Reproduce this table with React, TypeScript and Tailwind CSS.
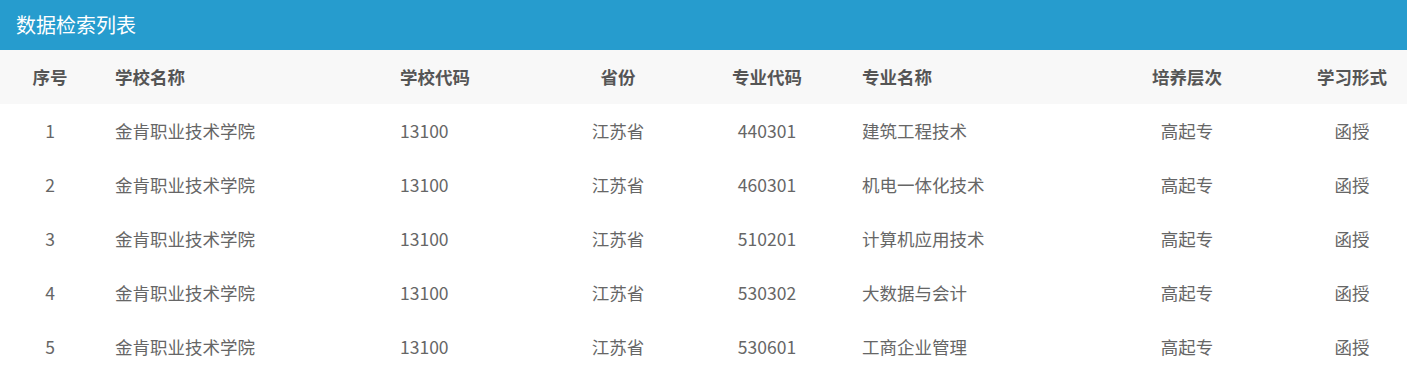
import React from "react";

const rows = [
  ["1", "金肯职业技术学院", "13100", "江苏省", "440301", "建筑工程技术", "高起专", "函授"],
  ["2", "金肯职业技术学院", "13100", "江苏省", "460301", "机电一体化技术", "高起专", "函授"],
  ["3", "金肯职业技术学院", "13100", "江苏省", "510201", "计算机应用技术", "高起专", "函授"],
  ["4", "金肯职业技术学院", "13100", "江苏省", "530302", "大数据与会计", "高起专", "函授"],
  ["5", "金肯职业技术学院", "13100", "江苏省", "530601", "工商企业管理", "高起专", "函授"],
];

const headers = ["序号", "学校名称", "学校代码", "省份", "专业代码", "专业名称", "培养层次", "学习形式"];
const align = [
  "justify-center",
  "justify-start pl-[15px]",
  "justify-start pl-[15px]",
  "justify-center",
  "justify-center",
  "justify-start pl-[15px]",
  "justify-center",
  "justify-center",
];

const grid = "grid grid-cols-[100px_285px_164px_138px_160px_230px_220px_110px]";

export default function App() {
  return (
    <div
      className="w-[1407px] h-[371px] overflow-hidden bg-white"
      style={{ fontFamily: '"Noto Sans CJK SC", "Noto Sans", sans-serif' }}
    >
      <div className="h-[50px] bg-[#269cce] flex items-center pl-[16px] text-white text-[20px]">
        数据检索列表
      </div>
      <div className={`${grid} h-[54px] bg-[#f8f8f8] text-[#555] font-bold text-[17.5px]`}>
        {headers.map((h, i) => (
          <div key={i} className={`flex items-center ${align[i]}`}>
            {h}
          </div>
        ))}
      </div>
      {rows.map((r, ri) => (
        <div key={ri} className={`${grid} h-[54px] text-[#666] text-[17.5px]`}>
          {r.map((c, i) => (
            <div key={i} className={`flex items-center ${align[i]}`}>
              {c}
            </div>
          ))}
        </div>
      ))}
    </div>
  );
}
